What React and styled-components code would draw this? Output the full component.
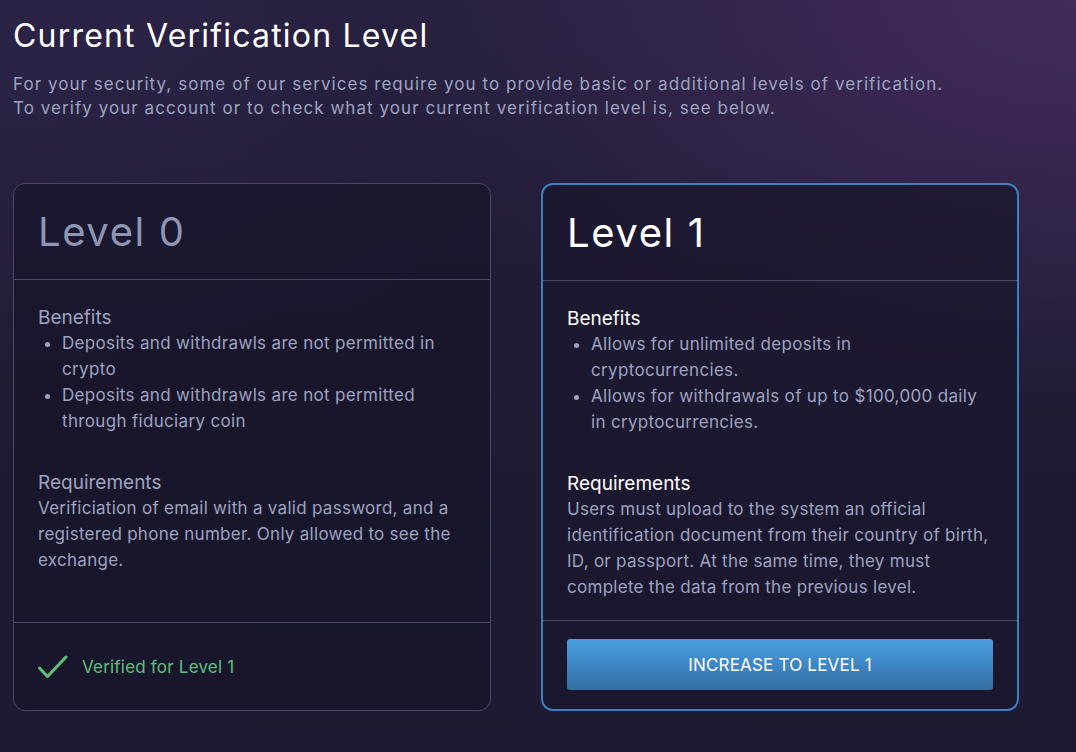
import React from "react";
import styled, { createGlobalStyle } from "styled-components";

const GlobalStyle = createGlobalStyle`
  html, body {
    margin: 0;
    padding: 0;
    height: 100%;
  }
  body {
    font-family: Inter, "Noto Sans", sans-serif;
    background: #1d1a31;
    -webkit-font-smoothing: antialiased;
  }
  * { box-sizing: border-box; }
`;

const Page = styled.div`
  min-height: 752px;
  padding: 17px 13px 40px;
  background:
    radial-gradient(ellipse 700px 420px at 100% 0%, rgba(72, 46, 98, 0.85), rgba(72, 46, 98, 0) 100%),
    radial-gradient(ellipse 600px 400px at 0% 0%, rgba(44, 36, 72, 0.9), rgba(44, 36, 72, 0) 100%),
    linear-gradient(180deg, #251f3c 0%, #1d1a31 70%, #1e1a33 100%);
`;

const Title = styled.h1`
  margin: 0;
  font-size: 32px;
  font-weight: 400;
  line-height: 38px;
  letter-spacing: 1.2px;
  color: #ffffff;
`;

const Intro = styled.p`
  margin: 17px 0 0;
  font-size: 17px;
  line-height: 24px;
  letter-spacing: 1.05px;
  color: #9ea3c0;
`;

const Cards = styled.div`
  display: grid;
  grid-template-columns: 478px 478px;
  gap: 50px;
  margin-top: 63px;
`;

const Card = styled.section`
  display: flex;
  flex-direction: column;
  border-radius: 12px;
  border: ${(p) => (p.$active ? "2px solid #3d7fbf" : "1px solid #4a4866")};
  background: ${(p) => (p.$active ? "rgba(27, 23, 46, 0.78)" : "rgba(24, 21, 42, 0.8)")};
  overflow: hidden;
`;

const CardHead = styled.div`
  height: 96px;
  display: flex;
  align-items: center;
  padding: 0 24px;
  border-bottom: 1px solid #4a4866;
`;

const LevelName = styled.h2`
  margin: 0;
  font-size: 40px;
  font-weight: 400;
  letter-spacing: 1.6px;
  color: ${(p) => (p.$active ? "#ffffff" : "#8f95b5")};
`;

const CardBody = styled.div`
  flex: 1;
  padding: 26px 24px 20px;
`;

const SectionTitle = styled.h3`
  margin: 0;
  font-size: 19px;
  font-weight: 400;
  line-height: 24px;
  color: ${(p) => (p.$active ? "#ffffff" : "#9ea3c0")};
`;

const List = styled.ul`
  margin: 0 0 37px;
  padding-left: 24px;
  font-size: 17px;
  line-height: 26px;
  letter-spacing: 0.33px;
  color: #9ea3c0;

  li::marker {
    font-size: 16px;
  }
`;

const Text = styled.p`
  margin: 0;
  font-size: 17px;
  line-height: 26px;
  letter-spacing: 0.28px;
  color: #9ea3c0;
`;

const CardFoot = styled.div`
  border-top: 1px solid #4a4866;
  padding: ${(p) => (p.$active ? "18px 24px 19px" : "0 24px")};
  height: ${(p) => (p.$active ? "auto" : "88px")};
  display: flex;
  align-items: center;
`;

const Verified = styled.div`
  display: flex;
  align-items: center;
  gap: 14px;
  font-size: 17px;
  letter-spacing: 0.2px;
  color: #5fc07c;
`;

const IncreaseButton = styled.button`
  width: 100%;
  height: 51px;
  border: none;
  border-radius: 3px;
  background: linear-gradient(180deg, #4a9de0 0%, #3d84c2 55%, #366f9f 100%);
  color: #ffffff;
  font-family: inherit;
  font-size: 17px;
  letter-spacing: 0.2px;
  cursor: pointer;
`;

const CheckIcon = () => (
  <svg width="30" height="26" viewBox="0 0 30 26" fill="none">
    <polyline
      points="1.5,14 9.5,22.5 28,3"
      stroke="#5fc07c"
      strokeWidth="3"
      strokeLinecap="round"
      strokeLinejoin="round"
    />
  </svg>
);

const LevelCard = ({ active, name, benefits, requirements, footer }) => (
  <Card $active={active}>
    <CardHead>
      <LevelName $active={active}>{name}</LevelName>
    </CardHead>
    <CardBody>
      <SectionTitle $active={active}>Benefits</SectionTitle>
      <List>
        {benefits.map((b) => (
          <li key={b}>{b}</li>
        ))}
      </List>
      <SectionTitle $active={active}>Requirements</SectionTitle>
      <Text>{requirements}</Text>
    </CardBody>
    <CardFoot $active={active}>{footer}</CardFoot>
  </Card>
);

export default function App() {
  return (
    <>
      <GlobalStyle />
      <Page>
        <Title>Current Verification Level</Title>
        <Intro>
          For your security, some of our services require you to provide basic or additional levels of verification.
          <br />
          To verify your account or to check what your current verification level is, see below.
        </Intro>
        <Cards>
          <LevelCard
            name="Level 0"
            benefits={[
              "Deposits and withdrawls are not permitted in crypto",
              "Deposits and withdrawls are not permitted through fiduciary coin",
            ]}
            requirements="Verificiation of email with a valid password, and a registered phone number. Only allowed to see the exchange."
            footer={
              <Verified>
                <CheckIcon />
                Verified for Level 1
              </Verified>
            }
          />
          <LevelCard
            active
            name="Level 1"
            benefits={[
              "Allows for unlimited deposits in cryptocurrencies.",
              "Allows for withdrawals of up to $100,000 daily in cryptocurrencies.",
            ]}
            requirements="Users must upload to the system an official identification document from their country of birth, ID, or passport. At the same time, they must complete the data from the previous level."
            footer={<IncreaseButton>INCREASE TO LEVEL 1</IncreaseButton>}
          />
        </Cards>
      </Page>
    </>
  );
}
